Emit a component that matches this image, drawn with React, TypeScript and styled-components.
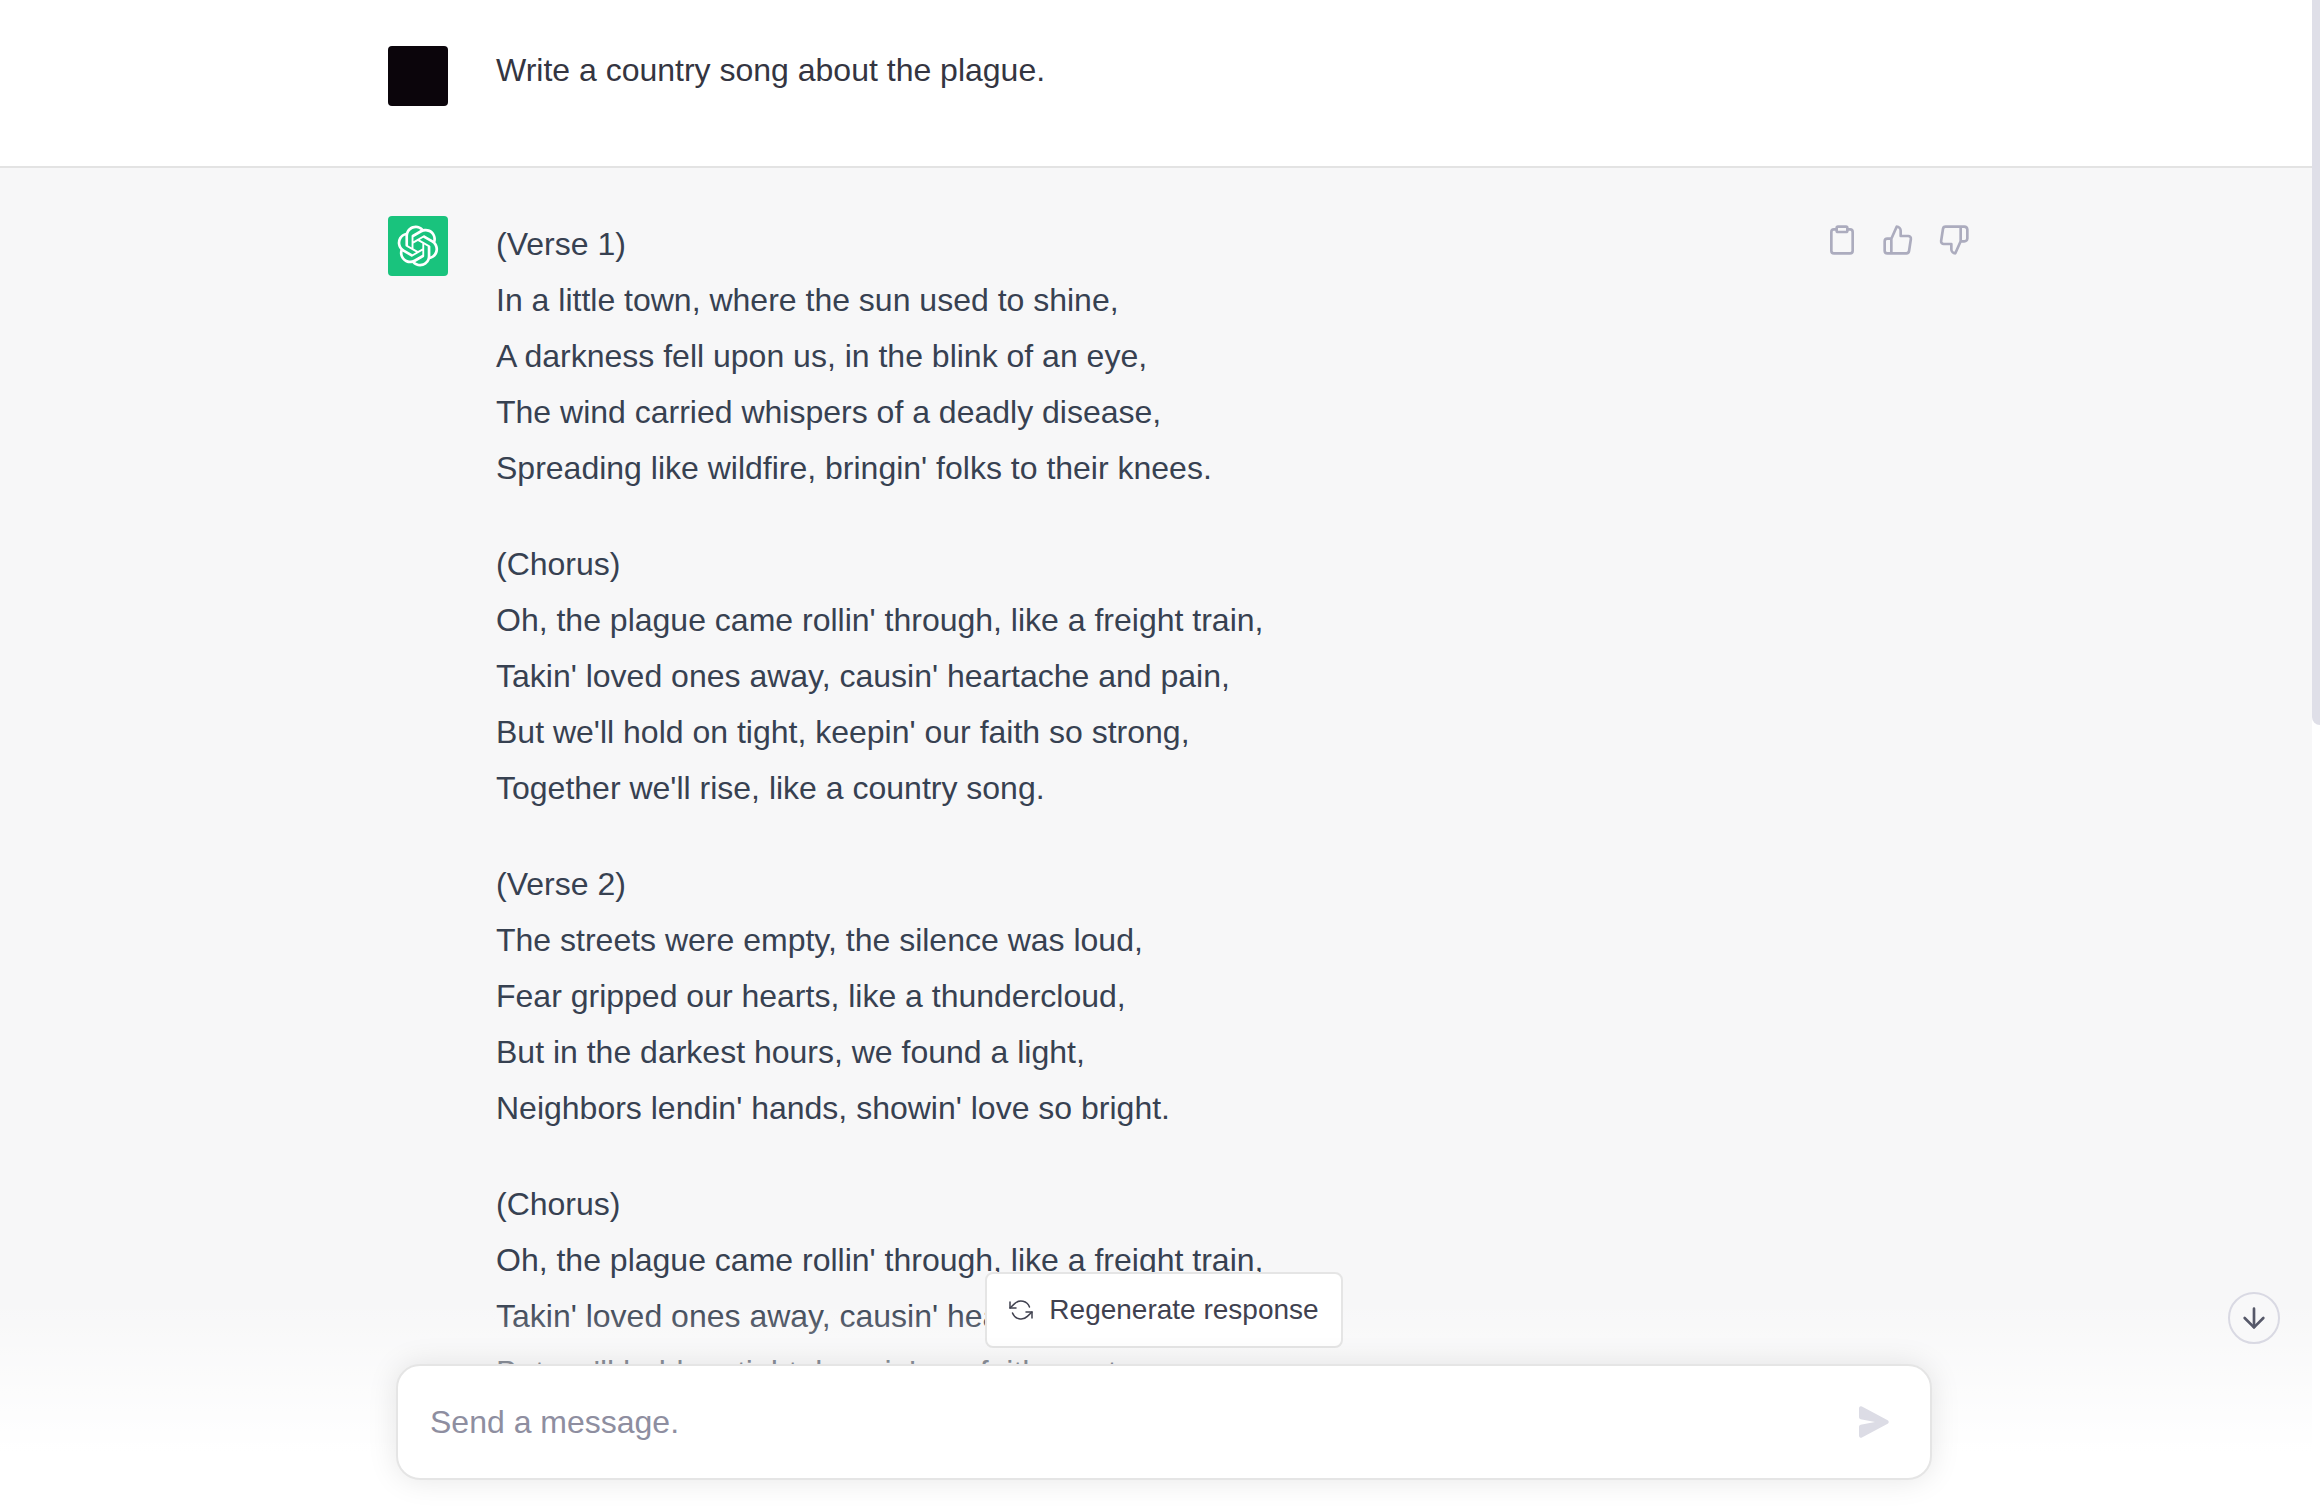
import React, { useState } from "react";
import styled, { createGlobalStyle } from "styled-components";

const GlobalStyle = createGlobalStyle`
  *, *::before, *::after { box-sizing: border-box; }
  html, body, #root { height: 100%; }
  body {
    margin: 0;
    background: #fff;
    font-family: "Liberation Sans", Arial, sans-serif;
    font-size: 32px;
    color: #343541;
  }
  button, input { font: inherit; color: inherit; }
  svg { display: block; }
`;

const Screen = styled.div`
  display: flex;
  height: 100vh;
  overflow: hidden;
`;

const Pane = styled.main`
  position: relative;
  flex: 1;
  min-width: 0;
`;

const Conversation = styled.div`
  display: flex;
  flex-direction: column;
  height: 100%;
  overflow: hidden auto;
  scrollbar-width: none;
`;

const Row = styled.article<{ $assistant?: boolean }>`
  flex: ${(p) => (p.$assistant ? "1 0 auto" : "none")};
  padding: ${(p) => (p.$assistant ? "48px 0" : "46px 0 60px")};
  background: ${(p) => (p.$assistant ? "#f7f7f8" : "#fff")};
  border-bottom: ${(p) => (p.$assistant ? "0" : "2px solid #e3e3e3")};
  color: ${(p) => (p.$assistant ? "#374151" : "#343541")};
`;

const RowInner = styled.div`
  position: relative;
  display: flex;
  gap: 48px;
  max-width: 1536px;
  margin: 0 auto;
`;

const Avatar = styled.div<{ $color: string }>`
  display: grid;
  place-items: center;
  flex: none;
  width: 60px;
  height: 60px;
  border-radius: 4px;
  background: ${(p) => p.$color};
  color: #fff;
`;

const Message = styled.div<{ $line: number }>`
  display: flex;
  flex-direction: column;
  gap: 40px;
  flex: 1;
  min-width: 0;
  line-height: ${(p) => p.$line}px;
`;

const Stanza = styled.p`
  margin: 0;
  white-space: pre-line;
`;

const Actions = styled.div`
  position: absolute;
  top: 0;
  left: calc(100% - 106px);
  display: flex;
  gap: 8px;
`;

const IconButton = styled.button`
  padding: 8px;
  border: 0;
  border-radius: 8px;
  background: none;
  color: #acacbe;
  cursor: pointer;
  &:hover { background: #ececf1; }
`;

const Footer = styled.div`
  position: absolute;
  inset: auto 0 0 0;
  display: flex;
  flex-direction: column;
  align-items: center;
  gap: 16px;
  padding: 32px 0 30px 16px;
  background: linear-gradient(180deg, rgba(255, 255, 255, 0) 60px, #fff 212px);
`;

const RegenerateButton = styled.button`
  display: flex;
  align-items: center;
  gap: 16px;
  height: 76px;
  padding: 0 22px;
  border: 2px solid #e5e5e5;
  border-radius: 8px;
  background: #fff;
  color: #40414f;
  font-size: 28px;
  cursor: pointer;
`;

const Composer = styled.form`
  display: flex;
  align-items: center;
  width: 100%;
  max-width: 1536px;
  height: 116px;
  padding: 0 32px;
  border: 2px solid #e5e5e5;
  border-radius: 24px;
  background: #fff;
  box-shadow: 0 0 30px rgba(0, 0, 0, 0.1);
`;

const MessageInput = styled.input`
  flex: 1;
  min-width: 0;
  padding: 0;
  border: 0;
  outline: 0;
  background: none;
  &::placeholder { color: #8e8ea0; opacity: 1; }
`;

const SendButton = styled(IconButton)`
  color: #dcdce5;
`;

const ScrollDown = styled.button`
  position: absolute;
  right: 32px;
  bottom: 166px;
  display: grid;
  place-items: center;
  width: 52px;
  height: 52px;
  padding: 0;
  border: 2px solid #d9d9e3;
  border-radius: 50%;
  background: #f8f8f9;
  color: #565869;
  cursor: pointer;
`;

const Track = styled.div`
  flex: none;
  width: 8px;
  background: #fff;
`;

const Thumb = styled.div`
  height: 48%;
  border-radius: 0 0 0 8px;
  background: #dfdfe8;
`;

type LineIconProps = { size: number; stroke?: number; children: React.ReactNode };

const LineIcon = ({ size, stroke = 2, children }: LineIconProps) => (
  <svg
    width={size}
    height={size}
    viewBox="0 0 24 24"
    fill="none"
    stroke="currentColor"
    strokeWidth={stroke}
    strokeLinecap="round"
    strokeLinejoin="round"
    aria-hidden="true"
  >
    {children}
  </svg>
);

const Logo = () => (
  <svg width="42" height="42" viewBox="0 0 41 41" fill="currentColor" aria-hidden="true">
    <path d="M37.5324 16.8707C37.9808 15.5241 38.1363 14.0974 37.9886 12.6859C37.8409 11.2744 37.3934 9.91076 36.676 8.68622C35.6126 6.83404 33.9882 5.3676 32.0373 4.4985C30.0864 3.62941 27.9098 3.40259 25.8215 3.85078C24.8796 2.7893 23.7219 1.94125 22.4257 1.36341C21.1295 0.785575 19.7249 0.491269 18.3058 0.500197C16.1708 0.495044 14.0893 1.16803 12.3614 2.42214C10.6335 3.67624 9.34853 5.44666 8.6917 7.47815C7.30085 7.76286 5.98686 8.3414 4.8377 9.17505C3.68854 10.0087 2.73073 11.0782 2.02839 12.312C0.956464 14.1591 0.498905 16.2988 0.721698 18.4228C0.944492 20.5467 1.83612 22.5449 3.268 24.1293C2.81966 25.4759 2.66413 26.9026 2.81182 28.3141C2.95951 29.7256 3.40701 31.0892 4.12437 32.3138C5.18791 34.1659 6.8123 35.6322 8.76321 36.5013C10.7141 37.3704 12.8907 37.5973 14.9789 37.1492C15.9208 38.2107 17.0786 39.0587 18.3747 39.6366C19.6709 40.2144 21.0755 40.5087 22.4946 40.4998C24.6307 40.5054 26.7133 39.8321 28.4418 38.5772C30.1704 37.3223 31.4556 35.5506 32.1119 33.5179C33.5027 33.2332 34.8167 32.6547 35.9659 31.821C37.115 30.9874 38.0728 29.9178 38.7752 28.684C39.8458 26.8371 40.3023 24.6979 40.0789 22.5748C39.8556 20.4517 38.9639 18.4544 37.5324 16.8707ZM22.4978 37.8849C20.7443 37.8874 19.0459 37.2733 17.6994 36.1501C17.7601 36.117 17.8666 36.0586 17.936 36.0161L25.9004 31.4156C26.1003 31.3019 26.2663 31.137 26.3813 30.9378C26.4964 30.7386 26.5563 30.5124 26.5549 30.2825V19.0542L29.9213 20.998C29.9389 21.0068 29.9541 21.0198 29.9656 21.0359C29.977 21.052 29.9842 21.0707 29.9867 21.0902V30.3889C29.9842 32.375 29.1946 34.2791 27.7909 35.6841C26.3872 37.0892 24.4838 37.8806 22.4978 37.8849ZM6.39227 31.0064C5.51397 29.4888 5.19742 27.7107 5.49804 25.9832C5.55718 26.0187 5.66048 26.0818 5.73461 26.1244L13.699 30.7248C13.8975 30.8408 14.1233 30.902 14.3532 30.902C14.583 30.902 14.8088 30.8408 15.0073 30.7248L24.731 25.1103V28.9979C24.7321 29.0177 24.7283 29.0376 24.7199 29.0556C24.7115 29.0736 24.6988 29.0893 24.6829 29.1012L16.6317 33.7497C14.9096 34.7416 12.8643 35.0097 10.9447 34.4954C9.02506 33.9811 7.38785 32.7263 6.39227 31.0064ZM4.29707 13.6194C5.17156 12.0998 6.55279 10.9364 8.19885 10.3327C8.19885 10.4013 8.19491 10.5228 8.19491 10.6071V19.808C8.19351 20.0378 8.25334 20.2638 8.36823 20.4629C8.48312 20.6619 8.64893 20.8267 8.84863 20.9404L18.5723 26.5542L15.206 28.4979C15.1894 28.5089 15.1703 28.5155 15.1505 28.5173C15.1307 28.5191 15.1107 28.516 15.0924 28.5082L7.04046 23.8557C5.32135 22.8601 4.06716 21.2235 3.55289 19.3046C3.03862 17.3858 3.30624 15.3413 4.29707 13.6194ZM31.955 20.0556L22.2312 14.4411L25.5976 12.4981C25.6142 12.4872 25.6333 12.4805 25.6531 12.4787C25.6729 12.4769 25.6928 12.4801 25.7111 12.4879L33.7631 17.1364C34.9967 17.849 36.0017 18.8982 36.6606 20.1613C37.3194 21.4244 37.6047 22.849 37.4832 24.2684C37.3617 25.6878 36.8382 27.0432 35.9743 28.1759C35.1103 29.3086 33.9415 30.1717 32.6047 30.6641C32.6047 30.5947 32.6047 30.4733 32.6047 30.3889V21.188C32.6066 20.9586 32.5474 20.7328 32.4332 20.5338C32.319 20.3348 32.154 20.1698 31.955 20.0556ZM35.3055 15.0128C35.2464 14.9765 35.1431 14.9142 35.069 14.8717L27.1045 10.2712C26.906 10.1554 26.6803 10.0943 26.4504 10.0943C26.2206 10.0943 25.9948 10.1554 25.7963 10.2712L16.0726 15.8858V11.9982C16.0715 11.9783 16.0753 11.9585 16.0837 11.9405C16.0921 11.9225 16.1048 11.9068 16.1207 11.8949L24.1719 7.25025C25.4053 6.53903 26.8158 6.19376 28.2383 6.25482C29.6608 6.31589 31.0364 6.78077 32.2044 7.59508C33.3723 8.40939 34.2842 9.53945 34.8334 10.8531C35.3826 12.1667 35.5464 13.6095 35.3055 15.0128ZM14.2424 21.9419L10.8752 19.9981C10.8576 19.9893 10.8423 19.9763 10.8309 19.9602C10.8195 19.9441 10.8122 19.9254 10.8098 19.9058V10.6071C10.8107 9.18295 11.2173 7.78848 11.9819 6.58696C12.7466 5.38544 13.8377 4.42659 15.1275 3.82264C16.4173 3.21869 17.8524 2.99464 19.2649 3.1767C20.6775 3.35876 22.0089 3.93941 23.1034 4.85067C23.0427 4.88379 22.937 4.94215 22.8668 4.98473L14.9024 9.58517C14.7025 9.69878 14.5366 9.86356 14.4215 10.0626C14.3065 10.2616 14.2466 10.4877 14.2479 10.7175L14.2424 21.9419ZM16.071 17.9991L20.4018 15.4978L24.7325 17.9975V22.9985L20.4018 25.4983L16.071 22.9985V17.9991Z" />
  </svg>
);

const stanzas = [
  `(Verse 1)
In a little town, where the sun used to shine,
A darkness fell upon us, in the blink of an eye,
The wind carried whispers of a deadly disease,
Spreading like wildfire, bringin' folks to their knees.`,
  `(Chorus)
Oh, the plague came rollin' through, like a freight train,
Takin' loved ones away, causin' heartache and pain,
But we'll hold on tight, keepin' our faith so strong,
Together we'll rise, like a country song.`,
  `(Verse 2)
The streets were empty, the silence was loud,
Fear gripped our hearts, like a thundercloud,
But in the darkest hours, we found a light,
Neighbors lendin' hands, showin' love so bright.`,
  `(Chorus)
Oh, the plague came rollin' through, like a freight train,
Takin' loved ones away, causin' heartache and pain,
But we'll hold on tight, keepin' our faith so strong,`,
];

export default function App() {
  const [draft, setDraft] = useState("");

  return (
    <>
      <GlobalStyle />
      <Screen>
        <Pane>
          <Conversation>
            <Row>
              <RowInner>
                <Avatar $color="#0b050b" />
                <Message $line={48}>
                  <Stanza>Write a country song about the plague.</Stanza>
                </Message>
              </RowInner>
            </Row>
            <Row $assistant>
              <RowInner>
                <Avatar $color="#19c37d">
                  <Logo />
                </Avatar>
                <Message $line={56}>
                  {stanzas.map((text, i) => (
                    <Stanza key={i}>{text}</Stanza>
                  ))}
                </Message>
                <Actions>
                  <IconButton type="button" aria-label="Copy">
                    <LineIcon size={32}>
                      <path d="M16 4h2a2 2 0 0 1 2 2v14a2 2 0 0 1-2 2H6a2 2 0 0 1-2-2V6a2 2 0 0 1 2-2h2" />
                      <rect x="8" y="2" width="8" height="4" rx="1" ry="1" />
                    </LineIcon>
                  </IconButton>
                  <IconButton type="button" aria-label="Good response">
                    <LineIcon size={32}>
                      <path d="M14 9V5a3 3 0 0 0-3-3l-4 9v11h11.28a2 2 0 0 0 2-1.7l1.38-9a2 2 0 0 0-2-2.3zM7 22H4a2 2 0 0 1-2-2v-7a2 2 0 0 1 2-2h3" />
                    </LineIcon>
                  </IconButton>
                  <IconButton type="button" aria-label="Bad response">
                    <LineIcon size={32}>
                      <path d="M10 15v4a3 3 0 0 0 3 3l4-9V2H5.72a2 2 0 0 0-2 1.7l-1.38 9a2 2 0 0 0 2 2.3zm7-13h2.67A2.31 2.31 0 0 1 22 4v7a2.31 2.31 0 0 1-2.33 2H17" />
                    </LineIcon>
                  </IconButton>
                </Actions>
              </RowInner>
            </Row>
          </Conversation>

          <Footer>
            <RegenerateButton type="button">
              <LineIcon size={24} stroke={1.5}>
                <polyline points="1 4 1 10 7 10" />
                <polyline points="23 20 23 14 17 14" />
                <path d="M20.49 9A9 9 0 0 0 5.64 5.64L1 10m22 4l-4.64 4.36A9 9 0 0 1 3.51 15" />
              </LineIcon>
              Regenerate response
            </RegenerateButton>
            <Composer onSubmit={(e) => e.preventDefault()}>
              <MessageInput
                aria-label="Message"
                placeholder="Send a message."
                value={draft}
                onChange={(e) => setDraft(e.target.value)}
              />
              <SendButton type="submit" aria-label="Send message">
                <svg width="32" height="32" viewBox="0 0 16 16" fill="currentColor" aria-hidden="true">
                  <path d="M.5 1.163A1 1 0 0 1 1.97.28l12.868 6.837a1 1 0 0 1 0 1.766L1.969 15.72A1 1 0 0 1 .5 14.836V10.33a1 1 0 0 1 .816-.983L8.5 8 1.316 6.653A1 1 0 0 1 .5 5.67V1.163Z" />
                </svg>
              </SendButton>
            </Composer>
          </Footer>

          <ScrollDown type="button" aria-label="Scroll to bottom">
            <LineIcon size={32}>
              <line x1="12" y1="5" x2="12" y2="19" />
              <polyline points="19 12 12 19 5 12" />
            </LineIcon>
          </ScrollDown>
        </Pane>
        <Track>
          <Thumb />
        </Track>
      </Screen>
    </>
  );
}
